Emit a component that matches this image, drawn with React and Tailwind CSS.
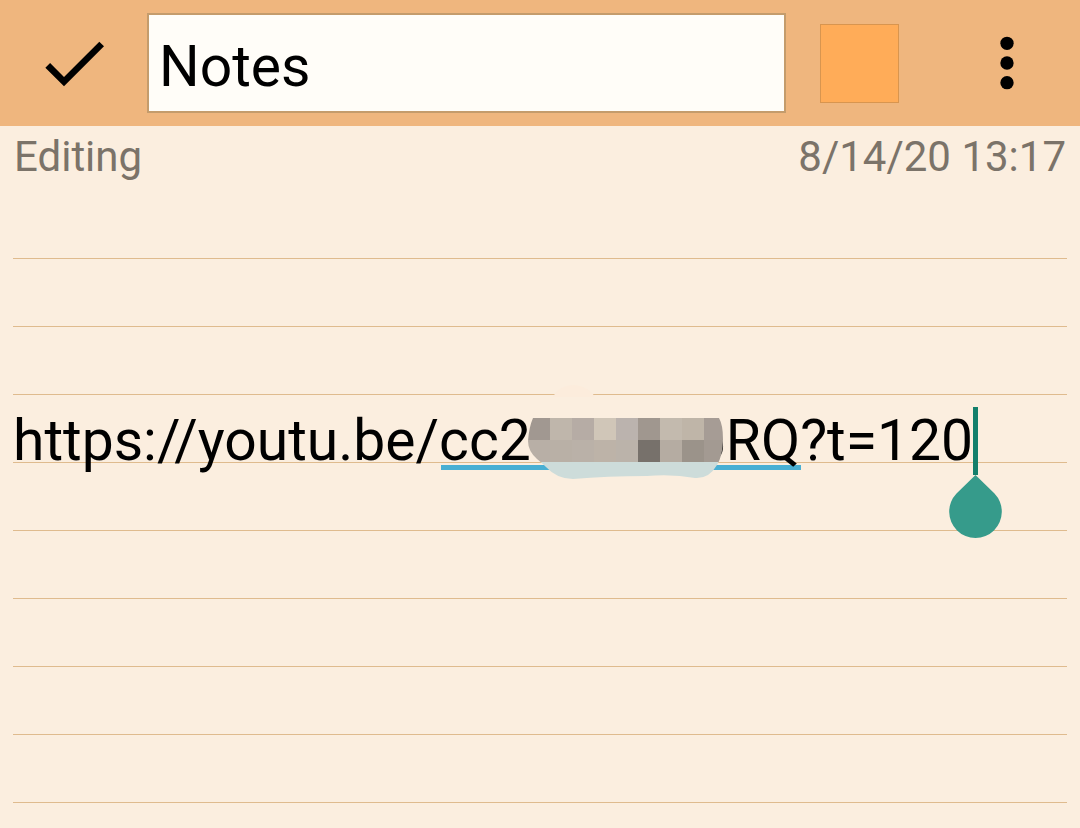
import React, { useState } from 'react';

const INITIAL_NOTE =
  '\n\n\nhttps://youtu.be/cc2\u2007\u2007\u00a0\u00a0\u00a0\u00a0\u00a0\u00a0\u00a06RQ?t=120';

// Pixelated cells, 22px each, two rows
const MOSAIC = [
  ['#a19891', '#bfb6ab', '#b6aca5', '#d0c6b8', '#bbb3ae', '#a0978f', '#c3baae', '#bfb5a8', '#a69c95'],
  ['#b8afa6', '#b9b0a6', '#bab1a8', '#bdb3a8', '#bbb3aa', '#77716b', '#b5aca2', '#9b938a', '#a39a92'],
];

function CheckIcon() {
  return (
    <svg viewBox="0 0 24 24" className="size-20" fill="currentColor" aria-hidden="true">
      <path d="M9 16.17 4.83 12l-1.42 1.41L9 19 21 7l-1.41-1.41z" />
    </svg>
  );
}

function MoreIcon() {
  return (
    <svg viewBox="0 0 24 24" className="size-20" fill="currentColor" aria-hidden="true">
      <circle cx="12" cy="6.1" r="2" />
      <circle cx="12" cy="12" r="2" />
      <circle cx="12" cy="17.9" r="2" />
    </svg>
  );
}

function Mosaic() {
  return (
    <svg
      viewBox="0 0 200 96"
      className="pointer-events-none absolute left-[514px] top-[180px] h-24 w-[200px]"
      aria-hidden="true"
    >
      <defs>
        <clipPath id="blob">
          <path d="M6 35 H192 Q196 42 196 56 Q196 72 190 82 Q182 96 168 95 Q146 91 120 93 Q80 93 46 96 Q30 96 19 84 Q14 79 10 76 Q1 68 1 58 Q2 44 6 35 Z" />
        </clipPath>
      </defs>
      <path d="M26 14 Q32 2 48 2 Q62 4 68 14 Z" fill="#fcecdc" />
      <g clipPath="url(#blob)">
        <rect x="0" y="78" width="200" height="18" fill="#cddcda" />
        {MOSAIC.map((row, y) =>
          row.map((fill, x) => (
            <rect key={`${x}-${y}`} x={1 + x * 22} y={35 + y * 22} width="22" height="22" fill={fill} shapeRendering="crispEdges" />
          ))
        )}
      </g>
    </svg>
  );
}

function CursorHandle() {
  return (
    <div className="pointer-events-none absolute left-[936px] top-[204px] flex w-[53px] flex-col items-center">
      <div className="h-[68px] w-[5px] bg-[#137f6b]" />
      <svg viewBox="0 0 53 63" className="h-[63px] w-[53px]" fill="#369b8b" aria-hidden="true">
        <path d="M26.5 0 L45.5 18.5 A26.3 26.3 0 1 1 7.5 18.5 Z" />
      </svg>
    </div>
  );
}

function App() {
  const [title, setTitle] = useState('Notes');
  const [note, setNote] = useState(INITIAL_NOTE);

  return (
    <div className="flex min-h-screen flex-col bg-[#fbeedf] font-[Roboto,sans-serif] text-black">
      {/* Toolbar */}
      <header className="flex items-center bg-[#efb67e] py-[13px]">
        <button type="button" aria-label="Done" className="flex w-[147px] shrink-0 justify-center">
          <CheckIcon />
        </button>
        <input
          type="text"
          aria-label="Title"
          value={title}
          onChange={(e) => setTitle(e.target.value)}
          className="h-[100px] min-w-0 flex-1 border-2 border-[#c49c6c] bg-[#fffdf8] px-2.5 pt-1.5 text-[57px] outline-none"
        />
        <button
          type="button"
          aria-label="Note color"
          className="ml-[34px] size-[79px] shrink-0 border border-[#d8954f] bg-[#ffac58]"
        />
        <button type="button" aria-label="More options" className="ml-[35px] flex w-[146px] shrink-0 justify-center">
          <MoreIcon />
        </button>
      </header>

      <div className="flex justify-between px-[14px] pt-1.5 pb-[22px] text-[42px] leading-[49px] text-[#7b7369]">
        <span>Editing</span>
        <time>8/14/20 13:17</time>
      </div>

      {/* Lined paper */}
      <main className="relative mx-[13px] flex flex-1">
        <div className="absolute left-[428px] top-[262px] h-[5px] w-[360px] bg-[#49afd3]" />
        <textarea
          aria-label="Note"
          spellCheck={false}
          value={note}
          onChange={(e) => setNote(e.target.value)}
          className="relative block w-full flex-1 resize-none overflow-hidden bg-[linear-gradient(transparent_55px,#dfbb8e_55px,#dfbb8e_56px,transparent_56px)] bg-[length:100%_68px] text-[57px] leading-[68px] outline-none"
        />
        <Mosaic />
        <CursorHandle />
      </main>
    </div>
  );
}

export default App;
